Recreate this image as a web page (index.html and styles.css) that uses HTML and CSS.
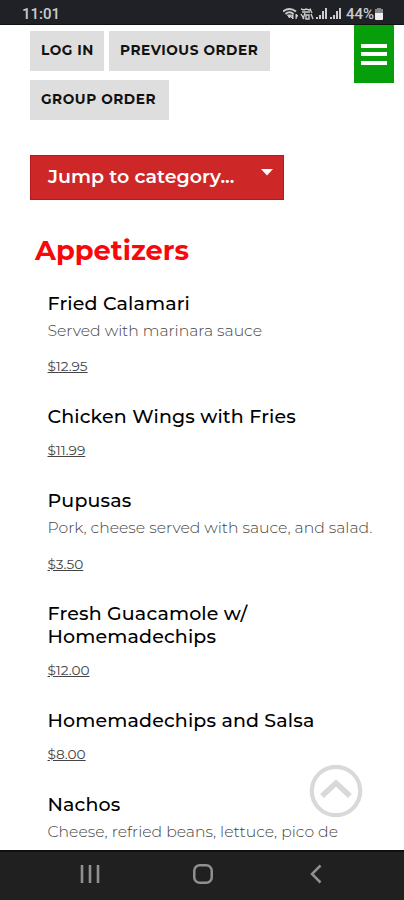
FILE: index.html
```
<!DOCTYPE html>
<html lang="en">
<head>
<meta charset="utf-8">
<meta name="viewport" content="width=device-width">
<title>Menu</title>
<link rel="stylesheet" href="styles.css">
</head>
<body>
<header class="status">
  <span class="clock">11:01</span>
  <svg class="signals" width="61" height="14" viewBox="0 0 61 14" fill="none" stroke="#ccc" stroke-width="2">
    <path d="M0 4.500Q6.500-.5 13 4.500M2.500 7Q6.500 3.500 10.500 7"/><path d="M4.500 8h4L6.500 11zM10 7v5l-2-2M13 12V7l2 2" fill="#ccc" stroke-width="1"/>
    <path d="M18 2l3 1 2-1 3 1 2-1M19 5h8M18 7l3 5M22 6l-2 6M23 8h3v4h-3zM28 7l2 5M27 2l2 4" stroke-width="1.400"/>
    <path d="M34 12V10M37 12V8M40 12V4M43 12V1M48 12V10M51 12V8M54 12V4M57 12V1"/>
  </svg>
  <span class="percent">44%</span>
  <svg class="battery" width="8" height="12" viewBox="0 0 8 12"><path d="M2 0h4v1h2v5H0V1h2z" fill="#85858a"/><path d="M0 5h8v6q0 1-1 1H1q-1 0-1-1z" fill="#eee"/></svg>
</header>
<main class="page">
  <button class="menu" aria-label="Menu"><i></i><i></i><i></i></button>
  <nav class="actions">
    <a class="btn login">LOG IN</a>
    <a class="btn previous">PREVIOUS ORDER</a>
    <a class="btn group">GROUP ORDER</a>
  </nav>
  <div class="jump"><span>Jump to category...</span><svg width="12" height="7" viewBox="0 0 12 7"><path d="M0 0h12L6 6.500z" fill="#fff"/></svg></div>
  <h1>Appetizers</h1>
  <section class="items">
    <article><h2>Fried Calamari</h2><p>Served with marinara sauce</p><span class="price">$12.95</span></article>
    <article><h2>Chicken Wings with Fries</h2><span class="price">$11.99</span></article>
    <article><h2>Pupusas</h2><p>Pork, cheese served with sauce, and salad.</p><span class="price">$3.50</span></article>
    <article><h2>Fresh Guacamole w/<br>Homemadechips</h2><span class="price">$12.00</span></article>
    <article><h2>Homemadechips and Salsa</h2><span class="price">$8.00</span></article>
    <article><h2>Nachos</h2><p>Cheese, refried beans, lettuce, pico de</p></article>
  </section>
  <svg class="top" width="54" height="54" viewBox="0 0 54 54" fill="none" stroke="#d9d9d9"><circle cx="27" cy="27" r="24.200" stroke-width="4.200"/><path d="M13 32L27 19l14 13" stroke-width="5.500"/></svg>
</main>
<footer class="navbar">
  <svg width="20" height="20" viewBox="0 0 20 20" stroke="#909090" stroke-width="2.600"><path d="M2 1v18M10 1v18M18 1v18"/></svg>
  <svg width="20" height="20" viewBox="0 0 20 20" fill="none" stroke="#909090" stroke-width="2.500"><rect x="1.250" y="1.250" width="17.500" height="17.500" rx="5.500"/></svg>
  <svg width="20" height="20" viewBox="0 0 20 20" fill="none" stroke="#909090" stroke-width="2.500"><path d="M14.500 1.500L6 10l8.500 8.500"/></svg>
</footer>
</body>
</html>
```
FILE: styles.css
```
* { box-sizing: border-box; }
body { margin: 0; width: 404px; height: 900px; overflow: hidden; display: flex; flex-direction: column; background: #fff; font-family: Montserrat, Inter, "Open Sans", sans-serif; color: #111; }
.status { height: 25px; flex: none; background: #202126; border-bottom: 1px solid #111; display: flex; align-items: center; padding: 3px 21px 0 22px; color: #ccc; font-family: Roboto, sans-serif; font-weight: 500; }
.clock { font-size: 15px; margin-right: auto; }
.percent { font-size: 15px; margin: 0 1px 0 2px; }
.page { position: relative; flex: 1; overflow: hidden; padding: 6px 0 0 30px; }
.menu { position: absolute; right: 10px; top: 0; width: 40px; height: 58px; background: #069e0a; border: 0; padding: 0; display: flex; flex-direction: column; align-items: center; justify-content: center; gap: 4.5px; }
.menu i { width: 26px; height: 4px; background: #fff; }
.actions { display: flex; flex-wrap: wrap; gap: 9px 5px; width: 260px; }
.btn { height: 40px; background: #dedede; font-size: 13.700px; font-weight: 700; line-height: 39px; padding-left: 11px; white-space: nowrap; letter-spacing: .55px; }
.login { width: 74px; }
.previous { width: 161px; }
.group { width: 139px; }
.jump { margin-top: 35px; width: 254px; height: 45px; background: #cd2827; border: 1px solid #b81818; display: flex; justify-content: space-between; padding: 0 10px 0 17px; color: #fff; font-size: 19px; font-weight: 600; line-height: 42px; }
.jump svg { margin-top: 13px; }
h1 { margin: 34px 0 0 5px; font-size: 27.300px; line-height: 34px; font-weight: 700; color: #f80808; }
.items { padding: 24.500px 0 0 17.500px; }
article { margin-bottom: 31px; }
h2 { margin: 0; font-size: 19px; letter-spacing: .15px; line-height: 22.500px; font-weight: 500; color: #000; white-space: nowrap; }
p { margin: 5px 0 0; padding-bottom: 2.300px; font-size: 15.650px; line-height: 22px; font-weight: 300; color: #444; white-space: nowrap; }
.price { display: block; width: max-content; margin-top: 14px; margin-bottom: 31.500px; font-size: 13.700px; line-height: 16px; color: #444; text-decoration: underline; text-underline-offset: 1px; }
.top { position: absolute; left: 309px; top: 739px; }
.navbar { height: 50px; flex: none; background: #202020; border-top: 2px solid #101010; display: flex; justify-content: space-between; padding: 12px 78px 0 80px; }
```
